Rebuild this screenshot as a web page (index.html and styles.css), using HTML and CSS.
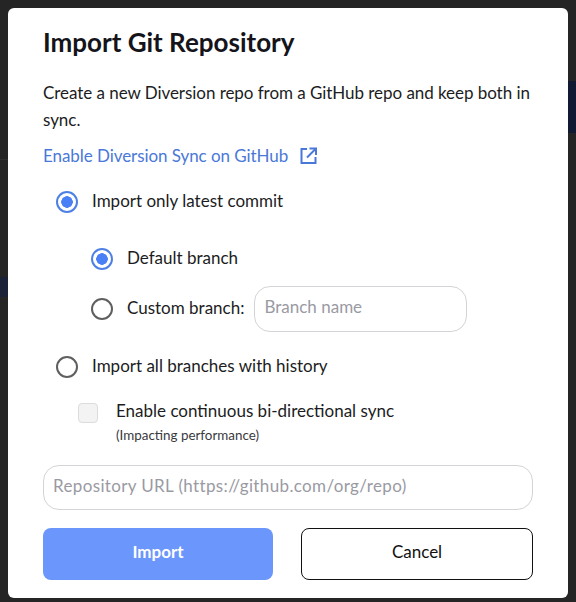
FILE: index.html
```html
<!DOCTYPE html>
<html lang="en">
<head>
<meta charset="UTF-8" />
<title>Import Git Repository</title>
<link rel="stylesheet" href="styles.css">
</head>
<body>

<div class="modal">
  <h2 class="modal-title">Import Git Repository</h2>
  <p class="modal-desc">Create a new Diversion repo from a GitHub repo and keep both in sync.</p>
  <a class="sync-link" href="#">
    Enable Diversion Sync on GitHub
    <svg class="link-icon" width="17" height="17" viewBox="0 0 17 17" fill="none" stroke="currentColor" stroke-width="2">
      <path d="M7 2H1.5v14h14v-6" />
      <path d="M9.5 1.5h6.5V8" />
      <path d="M15.5 2L7 10.5" />
    </svg>
  </a>

  <!-- Import options -->
  <div class="radio-row top-option first">
    <span class="radio checked"></span>
    <span class="radio-label">Import only latest commit</span>
  </div>
  <div class="radio-row sub-option default-branch">
    <span class="radio checked"></span>
    <span class="radio-label">Default branch</span>
  </div>
  <div class="radio-row sub-option custom-branch">
    <span class="radio"></span>
    <span class="radio-label">Custom branch:</span>
    <input class="text-input branch-input" type="text" placeholder="Branch name" />
  </div>
  <div class="radio-row top-option all-branches">
    <span class="radio"></span>
    <span class="radio-label">Import all branches with history</span>
  </div>

  <div class="sync-option">
    <span class="checkbox"></span>
    <div>
      <div class="sync-label">Enable continuous bi-directional sync</div>
      <div class="sync-note">(Impacting performance)</div>
    </div>
  </div>

  <input class="text-input url-input" type="text" placeholder="Repository URL (https://github.com/org/repo)" />

  <div class="modal-actions">
    <button class="btn btn-primary">Import</button>
    <button class="btn btn-outline">Cancel</button>
  </div>
</div>

</body>
</html>
```

FILE: styles.css
```css
* {
  box-sizing: border-box;
}
html, body {
  height: 100%;
}
body {
  margin: 0;
  padding: 8px;
  /* bits of the dimmed page showing beside the modal */
  background:
    linear-gradient(#101a33, #101a33) right 0 top 81px / 8px 52px no-repeat,
    linear-gradient(#1a2238, #1a2238) left 0 top 277px / 8px 20px no-repeat,
    linear-gradient(#303030, #303030) left 0 top 159px / 8px 1px no-repeat,
    #252525;
  font-family: Lato, "Open Sans", sans-serif;
  font-size: 17px;
  color: #1c1c22;
  overflow: hidden;
}

/* Modal */
.modal {
  width: 560px;
  height: 590px;
  padding: 18px 35px 0;
  background: #fff;
  border-radius: 6px;
}
.modal-title {
  margin: 0;
  font-size: 26px;
  line-height: 32px;
  font-weight: 700;
  color: #14141a;
}
.modal-desc {
  margin: 21px 0 0;
  line-height: 27px;
  letter-spacing: -0.05px;
}
.sync-link {
  display: flex;
  align-items: center;
  gap: 12px;
  margin-top: 8px;
  height: 28px;
  color: #4a78d8;
  letter-spacing: -0.06px;
  text-decoration: none;
}
.link-icon {
  flex: none;
}

/* Radio rows */
.radio-row {
  display: flex;
  align-items: center;
  gap: 14px;
}
.radio-label {
  padding-bottom: 4px;
}
.top-option {
  padding-left: 13px;
  height: 24px;
}
.top-option.first {
  margin-top: 21px;
}
.top-option.all-branches {
  margin-top: 23px;
}
.sub-option {
  padding-left: 48px;
}
.default-branch {
  margin-top: 33px;
  height: 24px;
}
.custom-branch {
  margin-top: 15px;
  height: 46px;
}
.radio {
  flex: none;
  width: 22px;
  height: 22px;
  border: 2px solid #5f5f5f;
  border-radius: 50%;
  background: #fff;
}
.radio.checked {
  border-color: #4d80e4;
  background: radial-gradient(circle, #4a80f5 0 5.5px, #fff 6px);
}

/* Inputs */
.text-input {
  border: 1px solid #d4d4d8;
  border-radius: 16px;
  background: #fff;
  font-family: inherit;
  font-size: 17px;
  padding: 0 9px 5px;
  outline: none;
}
.text-input::placeholder {
  color: #9a9aa3;
  opacity: 1;
}
.branch-input {
  width: 213px;
  height: 46px;
  margin-left: -4px;
}
.url-input {
  display: block;
  width: 490px;
  height: 45px;
  margin-top: 21px;
  letter-spacing: 0.36px;
}

/* Sync checkbox */
.sync-option {
  display: flex;
  align-items: flex-start;
  gap: 18px;
  margin-top: 20px;
  padding-left: 35px;
}
.checkbox {
  flex: none;
  width: 20px;
  height: 20px;
  margin-top: 4px;
  border: 1px solid #dcdcdc;
  border-radius: 4px;
  background: #f3f3f3;
}
.sync-label {
  line-height: 24px;
}
.sync-note {
  font-size: 13.4px;
  line-height: 18px;
  margin-top: 3px;
  color: #3a3a40;
}

/* Buttons */
.modal-actions {
  display: flex;
  justify-content: space-between;
  margin-top: 18px;
}
.btn {
  height: 52px;
  padding: 0 0 5px;
  border-radius: 8px;
  font-family: inherit;
  font-size: 17px;
  cursor: pointer;
}
.btn-primary {
  width: 230px;
  border: none;
  background: #6b96fb;
  color: #fff;
  font-weight: 700;
}
.btn-outline {
  width: 232px;
  border: 1px solid #111;
  background: #fff;
  color: #111;
}
```
